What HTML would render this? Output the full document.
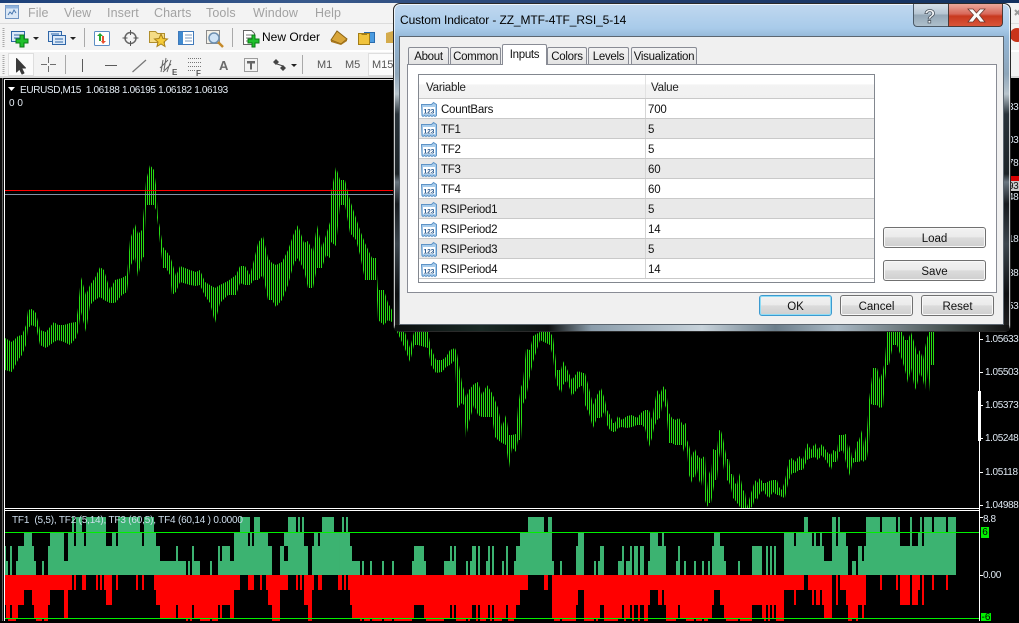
<!DOCTYPE html>
<html><head><meta charset="utf-8"><style>
*{box-sizing:border-box}
html,body{margin:0;padding:0}
body{width:1019px;height:621px;position:relative;overflow:hidden;background:#000;font-family:"Liberation Sans",sans-serif;font-size:12px}
.a{position:absolute;white-space:nowrap}
.m{top:6px;color:#a2a2a2;font-size:12.5px;letter-spacing:.1px}
.ax{position:absolute;left:985px;color:#dfe8f2;font-size:10px;letter-spacing:-.4px;line-height:14px;white-space:nowrap}
.tk{position:absolute;left:980px;width:3px;height:1px;background:#fff}
.tab{position:absolute;top:47px;height:17px;background:linear-gradient(#f4f4f4,#e3e3e3);border:1px solid #898c95;border-bottom:0;border-radius:2px 2px 0 0;text-align:center;line-height:19px;color:#111;font-size:11.5px;letter-spacing:-.3px}
.btn{position:absolute;border:1px solid #707070;border-radius:3px;background:linear-gradient(#f2f2f2 0,#ebebeb 48%,#dcdcdc 50%,#cfcfcf 100%);box-shadow:inset 0 0 0 1px #f8f8f8;text-align:center;color:#111;font-size:11.5px;line-height:22px}
.r{position:absolute;left:419px;width:455px;height:20px;border-bottom:1px solid #c9c9c9;color:#111;font-size:11.5px;line-height:22px}
.r.g{background:#e9e9e9}
.r b{font-weight:400;position:absolute;left:22px;top:0;letter-spacing:-.25px}
.r i{font-style:normal;position:absolute;left:229px;top:0;letter-spacing:-.2px}
.r u{position:absolute;left:226px;top:0;width:1px;height:19px;background:#d5d5d5}
.r svg{position:absolute;left:2px;top:2px}
</style></head><body>

<!-- app chrome -->
<div class="a" style="left:0;top:0;width:1019px;height:78px;background:#f3f3f3"></div>
<div class="a" style="left:0;top:0;width:1019px;height:3px;background:linear-gradient(90deg,#1c3f78,#38598c 30%,#243f6e 60%,#12305e)"></div>
<div class="a" style="left:0;top:23px;width:1019px;height:1px;background:#dcdcdc"></div>
<div class="a" style="left:0;top:50px;width:1019px;height:2px;background:#fff"></div>
<div class="a" style="left:0;top:76px;width:1019px;height:2px;background:#d8d8d8"></div>

<svg class="a" style="left:4px;top:4px" width="17" height="17" viewBox="0 0 17 17"><rect x="1.5" y="1.5" width="13" height="13" fill="#dbe8f6" stroke="#6f93c0"/><rect x="1.5" y="1.5" width="13" height="3" fill="#8fb2dc"/><path d="M4 11l2-3 2 2 2-4 2 3" fill="none" stroke="#4a78b0"/></svg>
<span class="a m" style="left:28px">File</span>
<span class="a m" style="left:64px">View</span>
<span class="a m" style="left:107px">Insert</span>
<span class="a m" style="left:154px">Charts</span>
<span class="a m" style="left:206px">Tools</span>
<span class="a m" style="left:253px">Window</span>
<span class="a m" style="left:315px">Help</span>

<svg class="a" style="left:0;top:24px" width="400" height="54" viewBox="0 24 400 54">
<path d="M3.5 28V48M3.5 55V74" stroke="#a8a8a8" stroke-dasharray="1 1" stroke-width="2"/>
<!-- new chart -->
<rect x="11.500" y="31.500" width="13" height="10" fill="#dbe9f8" stroke="#2f66a8"/><path d="M14 35h8M14 38h8" stroke="#2f66a8"/>
<path d="M18 36h4v4h4v4h-4v4h-4v-4h-4v-4h4z" transform="translate(2 -1)" fill="#1fc02c" stroke="#0a7a15"/>
<path d="M33 37h6l-3 3z" fill="#222"/>
<rect x="48.500" y="31.500" width="13" height="10" fill="#dbe9f8" stroke="#2f66a8"/><rect x="52.500" y="35.500" width="13" height="9" fill="#dbe9f8" stroke="#2f66a8"/><path d="M51 34h8M55 39h8M55 42h8" stroke="#2f66a8"/>
<path d="M70 37h6l-3 3z" fill="#222"/>
<path d="M84.500 28V47M232.500 28V47M65.500 55V74M302.500 55V74" stroke="#a9a9a9"/>
<!-- profile -->
<rect x="94.500" y="31.500" width="15" height="14" rx="1" fill="#fff" stroke="#5d8ec4"/><path d="M99 41v-5h-2l3-3 3 3h-2v5z" fill="#21a52c"/><path d="M104 36v5h2l-3 3-2-3h1v-5z" fill="#e8502c"/>
<!-- crosshair circle -->
<circle cx="130.500" cy="38" r="5.500" fill="none" stroke="#666" stroke-width="1.500"/><path d="M130.500 30v5M130.500 41v5M122.500 38h5M133.500 38h5" stroke="#555"/>
<!-- folder star -->
<path d="M149.500 31.500h6l2 2h7v9h-15z" fill="#f5dc86" stroke="#b18f2c"/><path d="M161 34l2 4.500 4.500.5-3.500 3 1 4.500-4-2.500-4 2.500 1-4.500-3.500-3 4.500-.5z" fill="#f5cb38" stroke="#a8801a"/>
<!-- list -->
<rect x="178.500" y="31.500" width="15" height="13" fill="#fff" stroke="#3f79ba"/><rect x="179" y="32" width="4" height="12" fill="#3f8ad0"/><path d="M185 35h7M185 38h7M185 41h7" stroke="#7a98bc"/>
<!-- magnify -->
<rect x="206.500" y="30.500" width="13" height="13" fill="#f4f1e8" stroke="#8a8a8a"/><circle cx="214" cy="38" r="5" fill="#cfe3f6" stroke="#6d8fb0" stroke-width="1.500"/><path d="M218 42l5 5" stroke="#c58a2a" stroke-width="2.500"/>
<!-- new order -->
<path d="M243.500 30.500h8l3 3v11h-11z" fill="#fff" stroke="#666"/><path d="M246 35h6M246 38h6M246 41h4" stroke="#777"/>
<path d="M251 38h3v4h4v4h-4v4h-3v-4h-4v-4h4z" transform="translate(1 -3)" fill="#1fc02c" stroke="#0a7a15"/>
<!-- gold -->
<path d="M337 31l10 8-6 5-10-4z" fill="#d9a63a" stroke="#8a6314"/><path d="M331 40l10 4 6-5v2l-6 4-10-3z" fill="#a9771c"/>
<!-- dollar -->
<rect x="364.500" y="32.500" width="10" height="10" fill="#4c9ce0" stroke="#2a6cae"/><rect x="358.500" y="33.500" width="11" height="11" fill="#f0c33c" stroke="#a37d16"/><path d="M367 34.500h-5v.5" stroke="#a37d16" fill="none"/>
<path d="M386 33l7 -2v12h-7z" fill="#d4ab4c"/>
<!-- cursor selected -->
<rect x="8.500" y="53.500" width="25" height="22" fill="#fbfbfb" stroke="#dedede"/>
<path d="M16.500 58.500v13.500l3-3 2.500 5 2-1-2.500-5h4z" fill="#3a3a3a" stroke="#3a3a3a" stroke-linejoin="round"/>
<path d="M48.500 57v6M48.500 66v6M41 64.500h6M50 64.500h6" stroke="#6e6e6e"/>
<path d="M82.500 59v13" stroke="#5a5a5a"/><path d="M105 65.500h12" stroke="#5a5a5a"/><path d="M132.500 72l13.500-12" stroke="#777" stroke-width="1.200"/>
<path d="M160 68l8-8M163 72l8-8M167 72l4-12M163 60l-2 12M166 58l-2 12" stroke="#666" fill="none"/>
<path d="M188 58.500h14M188 62.500h14M188 66.500h14M188 70.500h8" stroke="#777" stroke-dasharray="1 1"/>
<path d="M244.500 58.500h13v13h-13z" fill="none" stroke="#444" stroke-dasharray="1 1"/><path d="M247 61h8v2.500h-3v6h-2v-6h-3z" fill="#666"/>
<path d="M276 59l3 3-3 3-3-3zM283 65l3 3-3 3-3-3z" fill="#444"/><path d="M277 64l6 2" stroke="#444"/>
<path d="M291 64h6l-3 3z" fill="#222"/>
<rect x="368.500" y="53.500" width="26" height="22" fill="#fbfbfb" stroke="#dedede"/>
</svg>
<span class="a" style="left:262px;top:30px;font-size:12px;color:#000">New Order</span>
<span class="a" style="left:172px;top:68px;font-size:8px;font-weight:700;color:#555">E</span>
<span class="a" style="left:196px;top:69px;font-size:8px;font-weight:700;color:#555">F</span>
<span class="a" style="left:219px;top:58px;font-size:13px;font-weight:700;color:#6b6b6b">A</span>
<span class="a" style="left:317px;top:59px;font-size:11px;color:#555">M1</span>
<span class="a" style="left:345px;top:59px;font-size:11px;color:#555">M5</span>
<span class="a" style="left:372px;top:59px;font-size:11px;color:#555">M15</span>

<!-- chart -->
<svg class="a" style="left:0;top:0" width="1019" height="621" viewBox="0 0 1019 621">
<defs><pattern id="b" x="0" y="0" width="2" height="8" patternUnits="userSpaceOnUse"><rect x="1" width="1" height="8" fill="#27dc12"/></pattern>
<clipPath id="c"><rect x="5" y="80" width="973" height="428"/></clipPath></defs>
<rect x="0" y="78" width="4" height="543" fill="#0c0c0c"/><rect x="2" y="78" width="1" height="543" fill="#666"/>
<rect x="4" y="79" width="1" height="542" fill="#fff"/>
<rect x="4" y="79" width="975" height="1" fill="#ddd"/>
<g clip-path="url(#c)">
<path fill="url(#b)" d="M5 338 12 342 18 336 22 335 26 325 28 310 32 309 36 313 40 330 46 332 54 322 58 325 64 325 70 323 76 322 78 308 81 277 86 295 90 285 95 278 100 267 104 270 110 290 115 280 122 278 127 275 130 240 135 224 138 234 142 230 144 208 146 181 150 165 154 170 156 185 158 218 160 228 163 247 170 256 172 262 176 276 180 266 190 270 196 272 200 270 205 282 210 285 215 288 220 285 228 281 236 275 240 266 245 266 250 275 254 260 258 243 263 236 268 258 272 263 276 265 282 262 288 250 294 233 298 225 304 243 308 241 313 252 317 225 322 248 326 235 330 222 331 193 336 167 340 180 345 180 350 200 356 218 360 230 365 243 372 258 376 258 378 290 384 290 388 303 392 310 401 332 405 332 410 348 414 332 418 332 428 332 431 348 436 360 442 360 446 357 450 350 455 348 457 353 462 383 464 390 466 398 469 390 474 384 478 382 482 395 487 385 492 393 495 400 498 408 502 427 506 415 509 435 512 435 516 434 518 406 521 387 523 382 526 349 530 350 533 336 540 332 550 332 553 337 555 353 557 370 561 370 563 361 567 369 572 380 578 371 583 373 585 373 589 388 593 405 597 395 601 388 605 400 607 410 610 415 613 423 615 423 618 416 622 420 627 416 632 415 637 418 642 412 645 410 649 410 652 420 654 407 657 390 660 395 663 386 666 390 669 413 672 418 675 420 679 418 683 425 686 423 687 440 689 445 692 458 693 453 695 449 697 455 699 457 701 459 703 457 705 456 707 491 709 471 711 477 713 449 715 450 717 450 719 430 721 431 723 438 725 449 727 459 729 459 731 474 733 474 735 483 737 485 739 473 741 480 743 490 745 492 747 507 749 500 751 493 753 487 755 480 757 483 760 478 763 483 766 483 769 481 773 480 777 480 779 487 782 490 785 480 787 470 789 460 792 458 795 462 799 456 803 460 807 443 811 450 815 443 818 450 822 444 827 452 831 455 833 450 837 452 839 435 843 435 846 434 848 452 850 445 852 458 854 458 857 442 859 440 862 430 864 448 867 430 869 400 871 385 873 368 877 368 880 380 883 370 885 360 887 332 889 332 893 332 897 332 902 332 905 340 908 340 911 332 915 345 917 355 920 350 923 360 925 348 927 338 929 332 931 332 934 332 934 365 931 365 929 392 927 368 925 390 923 380 920 372 917 385 915 390 911 368 908 383 905 370 902 360 897 345 893 345 889 365 887 365 885 380 883 407 880 408 877 405 873 405 871 404 869 444 867 458 864 462 862 460 859 462 857 462 854 462 852 465 850 476 848 470 846 463 843 450 839 452 837 462 833 462 831 470 827 462 822 455 818 460 815 457 811 458 807 460 803 470 799 470 795 473 792 473 789 480 787 488 785 498 782 497 779 495 777 495 773 492 769 498 766 495 763 490 760 493 757 500 755 498 753 505 751 508 749 508 747 510 745 508 743 516 741 510 739 505 737 503 735 500 733 498 731 488 729 482 727 480 725 457 723 470 721 447 719 458 717 480 715 480 713 492 711 503 709 503 707 507 705 500 703 473 701 486 699 480 697 468 695 478 693 477 692 483 689 475 687 450 686 445 684 452 682 445 679 445 675 445 672 443 669 443 666 408 663 400 660 418 657 420 654 428 652 438 649 447 645 428 642 425 637 425 632 427 627 428 622 427 618 428 615 432 613 432 610 430 607 425 605 410 601 418 597 418 593 428 589 413 585 405 583 385 578 388 572 396 567 380 563 385 561 393 557 385 555 375 553 357 550 345 540 340 533 362 530 376 526 398 523 404 521 440 518 440 516 452 512 447 509 468 506 445 502 443 498 440 495 437 492 417 487 417 482 417 478 415 474 405 469 422 466 438 464 405 462 403 457 408 455 360 450 365 446 367 442 372 436 373 431 365 428 348 418 345 414 345 410 362 405 349 401 340 392 322 388 320 384 325 378 320 376 280 372 280 368 280 365 280 360 255 356 240 350 233 345 205 340 205 336 246 331 242 330 258 326 255 322 268 317 268 313 288 308 288 304 270 298 258 294 263 288 285 282 300 276 307 272 300 268 300 263 275 258 280 254 280 250 285 245 285 240 283 236 295 228 295 220 303 215 323 210 303 205 296 200 285 196 286 190 285 180 282 176 292 172 295 170 275 166 268 163 268 160 243 158 225 156 210 154 205 150 205 146 205 144 257 142 258 138 277 135 257 130 267 127 292 122 295 115 303 110 303 104 300 100 297 95 300 90 305 86 332 81 312 78 332 76 338 70 345 64 342 58 340 54 342 46 348 40 345 36 327 32 325 28 328 26 345 22 355 18 360 12 372 5 370Z"/>
</g>
<path d="M5 190.500H978" stroke="#ff0000"/><path d="M5 194.500H978" stroke="#8492a6"/>
<rect x="979" y="79" width="1" height="542" fill="#fff"/>
<path d="M4 508.500H979M4 510.500H979" stroke="#fff"/>
<rect x="978" y="391" width="3" height="50" fill="#fff"/>

<!-- histograms -->
<g fill="none">
<g stroke="#3cb371" transform="scale(.33333 1)">
<path stroke-width="15" d="M216 524.500H222M228 524.500H246M258 524.500H318M354 524.500H420M432 524.500H462M720 524.500H750M762 524.500H780M864 524.500H888M894 524.500H900M906 524.500H912M966 524.500H1002"/>
<path stroke-width="14" d="M72 539H96M150 539H192M204 539H222M228 539H252M258 539H318M336 539H348M354 539H426M432 539H468M702 539H744M750 539H756M762 539H804M852 539H912M942 539H954M960 539H1020"/>
<path stroke-width="15" d="M15 553.500H18M30 553.500H36M54 553.500H102M144 553.500H192M204 553.500H480M528 553.500H534M576 553.500H582M654 553.500H660M666 553.500H690M702 553.500H816M840 553.500H852M864 553.500H924M936 553.500H1020"/>
<path stroke-width="14" d="M15 568H24M30 568H36M48 568H108M126 568H132M144 568H558M564 568H570M576 568H600M630 568H636M654 568H816M840 568H924M936 568H1020"/>
</g>
<g stroke="#ff0000" transform="scale(.33333 1)">
<path stroke-width="15" d="M15 582.500H216M222 582.500H228M246 582.500H258M288 582.500H294M300 582.500H306M312 582.500H336M348 582.500H354M408 582.500H414M426 582.500H432M462 582.500H720M744 582.500H762M780 582.500H786M798 582.500H864M888 582.500H894M900 582.500H906M912 582.500H942M954 582.500H966M1014 582.500H1020"/>
<path stroke-width="15" d="M15 597.500H72M96 597.500H150M192 597.500H204M318 597.500H336M468 597.500H702M804 597.500H840M912 597.500H936"/>
<path stroke-width="13" d="M18 611.500H30M36 611.500H54M102 611.500H144M192 611.500H204M480 611.500H528M534 611.500H576M582 611.500H654M660 611.500H666M690 611.500H702M816 611.500H840M924 611.500H936"/>
<path stroke-width="3" d="M24 619.500H48M108 619.500H126M132 619.500H144M558 619.500H564M570 619.500H576M600 619.500H630M636 619.500H654M816 619.500H840M924 619.500H936"/>
</g>
<g stroke="#3cb371" transform="translate(340 0) scale(.33333 1)">
<path stroke-width="15" d="M6 524.500H12M18 524.500H24M564 524.500H612M624 524.500H636"/>
<path stroke-width="14" d="M0 539H30M540 539H636M714 539H732M930 539H954M966 539H972"/>
<path stroke-width="15" d="M0 553.500H36M222 553.500H252M330 553.500H336M342 553.500H348M396 553.500H408M414 553.500H420M444 553.500H450M456 553.500H462M498 553.500H504M528 553.500H636M708 553.500H732M780 553.500H792M846 553.500H852M870 553.500H876M882 553.500H894M900 553.500H912M930 553.500H978M1014 553.500H1020"/>
<path stroke-width="14" d="M0 568H60M66 568H72M90 568H96M126 568H132M156 568H162M216 568H258M312 568H348M378 568H384M390 568H408M414 568H420M438 568H450M456 568H462M486 568H492M498 568H504M522 568H642M660 568H666M708 568H732M762 568H768M774 568H792M834 568H852M858 568H876M882 568H894M900 568H912M924 568H978M1008 568H1020"/>
</g>
<g stroke="#ff0000" transform="translate(340 0) scale(.33333 1)">
<path stroke-width="15" d="M0 582.500H6M12 582.500H18M24 582.500H564M612 582.500H624M636 582.500H1020"/>
<path stroke-width="15" d="M30 597.500H540M636 597.500H714M732 597.500H930M954 597.500H966M972 597.500H1020"/>
<path stroke-width="13" d="M36 611.500H222M252 611.500H330M336 611.500H342M348 611.500H396M408 611.500H414M420 611.500H444M450 611.500H456M462 611.500H498M504 611.500H528M636 611.500H708M732 611.500H780M792 611.500H846M852 611.500H870M876 611.500H882M894 611.500H900M912 611.500H924M978 611.500H1014"/>
<path stroke-width="3" d="M60 619.500H66M72 619.500H90M96 619.500H126M132 619.500H156M162 619.500H216M258 619.500H312M348 619.500H378M384 619.500H390M408 619.500H414M420 619.500H438M450 619.500H456M462 619.500H486M504 619.500H522M642 619.500H660M666 619.500H708M732 619.500H762M768 619.500H774M792 619.500H834M852 619.500H858M876 619.500H882M894 619.500H900M912 619.500H924M978 619.500H1008"/>
</g>
<g stroke="#3cb371" transform="translate(679 0) scale(.33333 1)">
<path stroke-width="15" d="M375 524.500H387M459 524.500H471M477 524.500H483M561 524.500H603M609 524.500H651M657 524.500H663M693 524.500H699M723 524.500H729M735 524.500H759M765 524.500H801M807 524.500H831"/>
<path stroke-width="14" d="M105 539H123M315 539H345M351 539H399M405 539H411M423 539H429M459 539H471M477 539H501M561 539H663M693 539H699M717 539H729M735 539H831"/>
<path stroke-width="15" d="M0 553.500H3M99 553.500H135M219 553.500H249M261 553.500H267M273 553.500H279M285 553.500H291M315 553.500H435M459 553.500H507M537 553.500H549M555 553.500H831"/>
<path stroke-width="14" d="M0 568H3M15 568H21M45 568H51M69 568H75M87 568H93M99 568H141M177 568H183M219 568H249M261 568H267M273 568H279M285 568H291M315 568H507M519 568H531M537 568H831"/>
</g>
<g stroke="#ff0000" transform="translate(679 0) scale(.33333 1)">
<path stroke-width="15" d="M0 582.500H375M387 582.500H459M471 582.500H477M483 582.500H561M603 582.500H609M651 582.500H657M663 582.500H693M699 582.500H723M729 582.500H735M759 582.500H765M801 582.500H807"/>
<path stroke-width="15" d="M0 597.500H105M123 597.500H315M345 597.500H351M399 597.500H405M411 597.500H423M429 597.500H459M471 597.500H477M501 597.500H561M663 597.500H693M699 597.500H717M729 597.500H735"/>
<path stroke-width="13" d="M3 611.500H99M135 611.500H219M249 611.500H261M267 611.500H273M279 611.500H285M291 611.500H315M435 611.500H459M507 611.500H537M549 611.500H555"/>
<path stroke-width="3" d="M21 619.500H45M51 619.500H69M75 619.500H87M141 619.500H177M183 619.500H219M255 619.500H261M267 619.500H273M291 619.500H315M507 619.500H519M531 619.500H537"/>
</g>
</g>
<path d="M5 532.500H979M5 618.500H979" stroke="#00f000"/>
<path d="M8 87h7l-3.500 4z" fill="#fff"/>
</svg>

<span class="a" style="left:20px;top:85px;font-size:10px;letter-spacing:-.35px;line-height:12px;color:#e6eef6">EURUSD,M15&nbsp; 1.06188 1.06195 1.06182 1.06193</span>
<span class="a" style="left:9px;top:98px;font-size:10px;line-height:12px;color:#e6eef6">0 0</span>
<span class="a" style="left:12px;top:515px;font-size:10px;letter-spacing:-.2px;line-height:12px;color:#cfdfee">TF1&nbsp; (5,5), TF2 (5,14), TF3 (60,5), TF4 (60,14 ) 0.0000</span>

<span class="ax" style="top:101px">1.06433</span><span class="ax" style="top:134px">1.06303</span><span class="ax" style="top:157px">1.06278</span>
<div class="a" style="left:1010px;top:176px;width:9px;height:5px;background:#d80000"></div>
<div class="a" style="left:1008px;top:181px;width:11px;height:10px;background:#c8c8c8"></div>
<span class="a" style="left:985px;top:180px;font-size:10px;letter-spacing:-.4px;line-height:14px;color:#111">1.06193</span>
<span class="ax" style="top:191px">1.06148</span><span class="ax" style="top:233px">1.06018</span><span class="ax" style="top:267px">1.05888</span><span class="ax" style="top:300px">1.05753</span>
<span class="ax" style="top:333px">1.05633</span><span class="ax" style="top:366px">1.05503</span><span class="ax" style="top:399px">1.05373</span><span class="ax" style="top:432px">1.05248</span><span class="ax" style="top:466px">1.05118</span><span class="ax" style="top:499px">1.04988</span>
<div class="tk" style="top:339px"></div><div class="tk" style="top:372px"></div><div class="tk" style="top:405px"></div><div class="tk" style="top:438px"></div><div class="tk" style="top:472px"></div><div class="tk" style="top:505px"></div><div class="tk" style="top:575px"></div><div class="tk" style="top:517px"></div>
<span class="ax" style="top:513px;left:983px">8.8</span>
<span class="ax" style="top:569px;left:983px">0.00</span>
<div class="a" style="left:981px;top:527px;width:8px;height:11px;background:#00f000;color:#000;font-size:10px;line-height:11px;text-align:center">6</div>
<div class="a" style="left:981px;top:613px;width:10px;height:8px;background:#00f000;color:#000;font-size:10px;line-height:9px;text-align:center">-6</div>

<!-- right toolbar remnants -->
<svg class="a" style="left:1011px;top:0" width="8" height="78"><path d="M4 10l5 5M9 10l-5 5" stroke="#999" stroke-width="2"/><circle cx="6" cy="35" r="7" fill="#c8341a"/></svg>

<!-- dialog glass -->
<div class="a" style="left:393px;top:3px;width:618px;height:329px;border:1px solid #2a2a2a;border-radius:7px;box-shadow:inset 0 0 0 1px rgba(255,255,255,.75);background:linear-gradient(#c0d8ef 0,#a9cbea 24px,#93b6d6 34px,#8ea6ba 70px,#b8c4cc 90px,#29333a 110px,#1d2428 170px,#6a7680 178px,#171b1f 200px,#3c464e 240px,#0d0f11 290px,#222 329px)"></div>
<div class="a" style="left:395px;top:325px;width:614px;height:6px;background:linear-gradient(90deg,#0b0e0e 0,#1a2a26 14%,#0d1010 25%,#8b9dab 32%,#c7d2da 50%,#6b7d8a 62%,#a9b8c4 72%,#45504f 90%,#121212 100%)"></div>
<div class="a" style="left:400px;top:8px;width:400px;font-size:12px;color:#000;line-height:24px;letter-spacing:-.1px">Custom Indicator - ZZ_MTF-4TF_RSI_5-14</div>

<!-- caption buttons -->
<div class="a" style="left:913px;top:4px;width:35px;height:23px;border:1px solid #4b5a68;border-top:0;border-right:0;border-radius:0 0 0 4px;background:linear-gradient(#d6e0e9 0,#b6c5d2 45%,#94a7b6 50%,#aebfcc 100%)"></div>
<div class="a" style="left:948px;top:4px;width:55px;height:23px;border:1px solid #4b3a38;border-top:0;border-radius:0 0 4px 0;background:linear-gradient(#eba89a 0,#d8685a 45%,#c8391f 55%,#d9553a 100%)"></div>
<svg class="a" style="left:913px;top:4px" width="90" height="23"><text x="11" y="19" font-family="Liberation Sans" font-size="19" font-weight="700" fill="#f4f6f8" stroke="#4a5560" stroke-width=".8">?</text><path d="M55 5l5 0 3.500 4 3.500-4 5 0-5.500 6 5.500 7-5 0-3.500-4.500-3.500 4.500-5 0 5.500-7z" fill="#fafafa" stroke="#6d3a30" stroke-width=".8"/></svg>

<!-- client -->
<div class="a" style="left:399px;top:36px;width:605px;height:289px;background:#f0f0f0;border:1px solid #5c6670"></div>
<div class="a" style="left:407px;top:64px;width:590px;height:229px;background:#fff;border:1px solid #898c95"></div>

<div class="tab" style="left:408px;width:41px">About</div>
<div class="tab" style="left:450px;width:51px">Common</div>
<div class="tab" style="left:547px;width:40px">Colors</div>
<div class="tab" style="left:588px;width:41px">Levels</div>
<div class="tab" style="left:631px;width:66px">Visualization</div>
<div class="tab" style="left:502px;top:44px;width:45px;height:21px;background:#fff;line-height:20px;z-index:2">Inputs</div>

<!-- table -->
<div class="a" style="left:418px;top:74px;width:457px;height:209px;border:1px solid #82878f;background:#fff"></div>
<div class="a" style="left:419px;top:75px;width:455px;height:24px;background:linear-gradient(#fff 0,#fff 40%,#f3f3f3 42%,#f1f1f1 100%);border-bottom:1px solid #c9c9c9;color:#222;font-size:11.5px;line-height:27px"><span class="a" style="left:7px;top:0;letter-spacing:-.2px">Variable</span><span class="a" style="left:232px;top:0;letter-spacing:-.2px">Value</span><span class="a" style="left:226px;top:0;width:1px;height:23px;background:#e2e2e2"></span></div>

<div class="r" style="top:99px"><svg width="18" height="17"><use href="#ic"/></svg><b>CountBars</b><u></u><i>700</i></div>
<div class="r g" style="top:119px"><svg width="18" height="17"><use href="#ic"/></svg><b>TF1</b><u></u><i>5</i></div>
<div class="r" style="top:139px"><svg width="18" height="17"><use href="#ic"/></svg><b>TF2</b><u></u><i>5</i></div>
<div class="r g" style="top:159px"><svg width="18" height="17"><use href="#ic"/></svg><b>TF3</b><u></u><i>60</i></div>
<div class="r" style="top:179px"><svg width="18" height="17"><use href="#ic"/></svg><b>TF4</b><u></u><i>60</i></div>
<div class="r g" style="top:199px"><svg width="18" height="17"><use href="#ic"/></svg><b>RSIPeriod1</b><u></u><i>5</i></div>
<div class="r" style="top:219px"><svg width="18" height="17"><use href="#ic"/></svg><b>RSIPeriod2</b><u></u><i>14</i></div>
<div class="r g" style="top:239px"><svg width="18" height="17"><use href="#ic"/></svg><b>RSIPeriod3</b><u></u><i>5</i></div>
<div class="r" style="top:259px"><svg width="18" height="17"><use href="#ic"/></svg><b>RSIPeriod4</b><u></u><i>14</i></div>

<svg width="0" height="0" style="position:absolute"><defs><g id="ic"><path d="M.5 3.500h10l2-2 3 2v11l-1.500 1-1.500-1-1.500 1-1.500-1-1.500 1-1.500-1-1.500 1-1.500-1-1.500 1-1-1z" fill="#a9cdec" stroke="#5d93c6"/><rect x="2" y="6" width="12" height="7" fill="#fff"/><text x="2.500" y="12.500" font-family="Liberation Sans" font-size="6.500" font-weight="700" fill="#1c4f86">123</text></g></defs></svg>

<div class="btn" style="left:883px;top:227px;width:103px;height:21px">Load</div>
<div class="btn" style="left:883px;top:260px;width:103px;height:21px">Save</div>
<div class="btn" style="left:759px;top:295px;width:73px;height:21px;border-color:#3c9ad0;box-shadow:inset 0 0 0 1px #8fdcf5">OK</div>
<div class="btn" style="left:840px;top:295px;width:73px;height:21px">Cancel</div>
<div class="btn" style="left:921px;top:295px;width:73px;height:21px">Reset</div>
</body></html>
